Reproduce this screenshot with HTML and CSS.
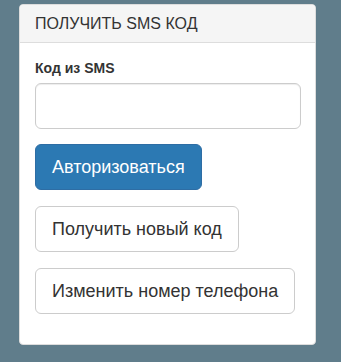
FILE: index.html
```html
<!DOCTYPE html>
<html lang="ru">
<head>
<meta charset="utf-8">
<link rel="stylesheet" href="styles.css">
</head>
<body>
<div class="panel">
  <div class="panel-heading">Получить SMS код</div>
  <div class="panel-body">
    <div class="form-group">
      <label class="label">Код из SMS</label>
      <input class="input" type="text">
    </div>
    <button class="btn btn-primary">Авторизоваться</button>
    <button class="btn">Получить новый код</button>
    <button class="btn">Изменить номер телефона</button>
  </div>
</div>
</body>
</html>
```
FILE: styles.css
```css
html, body {
  margin: 0;
  padding: 0;
  background: #607d8b;
  font-family: "Liberation Sans", Arial, sans-serif;
  font-size: 14px;
  line-height: 1.42857;
  color: #333;
}
body {
  padding: 4px 0 0 19px;
}
.panel {
  width: 297px;
  box-sizing: border-box;
  background: #fff;
  border: 1px solid #ddd;
  border-radius: 4px;
  box-shadow: 0 1px 1px rgba(0,0,0,.05);
}
.panel-heading {
  background: #f5f5f5;
  border-bottom: 1px solid #ddd;
  border-radius: 3px 3px 0 0;
  padding: 10px 15px;
  font-size: 16px;
  line-height: 17px;
  text-transform: uppercase;
  color: #333;
}
.panel-body {
  padding: 15px 15px 15px;
  display: flex;
  flex-direction: column;
  align-items: flex-start;
}
.form-group {
  align-self: stretch;
  margin-bottom: 15px;
  display: flex;
  flex-direction: column;
}
.label {
  font-weight: bold;
  font-size: 14px;
  line-height: 20px;
  margin-bottom: 5px;
}
.input {
  box-sizing: border-box;
  height: 46px;
  width: 266px;
  padding: 10px 16px;
  font-size: 18px;
  border: 1px solid #ccc;
  border-radius: 6px;
  box-shadow: inset 0 1px 1px rgba(0,0,0,.075);
  font-family: inherit;
  margin: 0;
}
.btn {
  box-sizing: border-box;
  height: 46px;
  padding: 10px 16px;
  font-family: inherit;
  font-size: 18px;
  line-height: 24px;
  border-radius: 6px;
  border: 1px solid #ccc;
  background: #fff;
  color: #333;
  margin: 0 0 16px 0;
  cursor: pointer;
}
.btn:last-child {
  margin-bottom: 15px;
}
.btn-primary {
  background: #2c79b3;
  border-color: #2e6da4;
  color: #fff;
}
```
